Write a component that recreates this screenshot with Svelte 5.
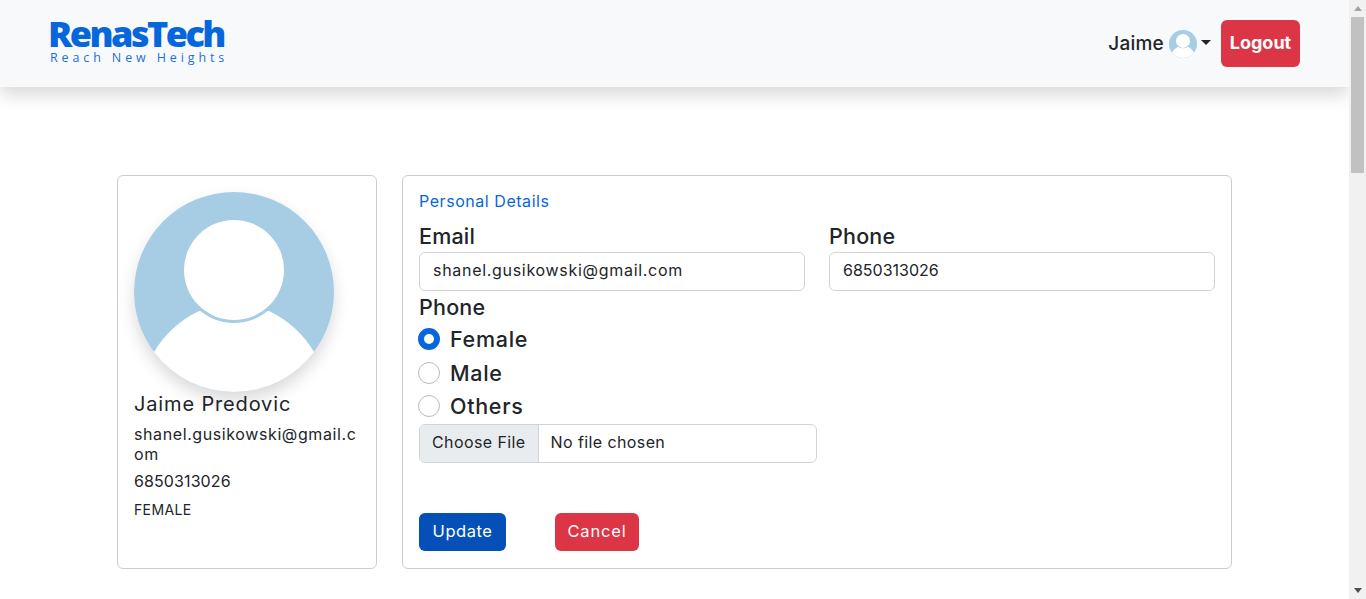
<script>
  let user = {
    first: "Jaime",
    name: "Jaime Predovic",
    email: "shanel.gusikowski@gmail.com",
    phone: "6850313026",
    gender: "FEMALE",
  };
  let genders = ["Female", "Male", "Others"];
  let selected = $state("Female");
</script>

{#snippet avatar(size)}
  <svg width={size} height={size} viewBox="0 0 200 200">
    <circle cx="100" cy="100" r="100" fill="#a6cde4" />
    <path d="M20 160Q36 133 65 119H135Q164 133 180 160A100 100 0 0 1 20 160Z" fill="#fff" />
    <circle cx="100" cy="78" r="53" fill="#a6cde4" />
    <circle cx="100" cy="78" r="50" fill="#fff" />
  </svg>
{/snippet}

<div class="window">
  <div class="page">
    <header>
      <div class="logo">
        <div class="logo-name">RenasTech</div>
        <div class="logo-tag">Reach New Heights</div>
      </div>
      <div class="user">
        <span class="user-name">Jaime</span>
        <span class="user-pic">{@render avatar(28)}</span>
        <span class="caret"></span>
        <button class="btn logout">Logout</button>
      </div>
    </header>

    <main>
      <section class="card side">
        <div class="pic">{@render avatar(200)}</div>
        <h2>{user.name}</h2>
        <p class="mail">{user.email}</p>
        <p class="tel">{user.phone}</p>
        <p class="gender">{user.gender}</p>
      </section>

      <section class="card details">
        <div class="title">Personal Details</div>
        <div class="fields">
          <div>
            <label for="email">Email</label>
            <input id="email" type="text" value={user.email} />
          </div>
          <div>
            <label for="phone">Phone</label>
            <input id="phone" class="digits" type="text" value={user.phone} />
          </div>
        </div>
        <div class="group-label">Phone</div>
        <div class="radios">
          {#each genders as g}
            <button class="radio-row" onclick={() => (selected = g)}>
              <span class="radio" class:on={selected === g}></span>
              <span>{g}</span>
            </button>
          {/each}
        </div>
        <div class="file">
          <span class="file-btn">Choose File</span>
          <span class="file-name">No file chosen</span>
        </div>
        <div class="actions">
          <button class="btn update">Update</button>
          <button class="btn cancel">Cancel</button>
        </div>
      </section>
    </main>
  </div>

  <div class="scrollbar">
    <span class="arrow up"></span>
    <div class="track"><div class="thumb"></div></div>
    <span class="arrow down"></span>
  </div>
</div>

<style>
  :global(body) {
    font-family: Inter, "Liberation Sans", sans-serif;
    color: #212529;
    background: #fff;
  }

  .window {
    display: flex;
    height: 599px;
    overflow: hidden;
  }

  .page {
    flex: 1;
    min-width: 0;
    overflow: hidden;
  }

  header {
    height: 87px;
    box-sizing: border-box;
    display: flex;
    align-items: center;
    justify-content: space-between;
    padding: 0 49px 0 50px;
    background: #f8f9fa;
    box-shadow: 0 8px 16px rgba(0, 0, 0, 0.15);
  }

  .logo {
    margin-top: -4px;
    margin-left: -2px;
  }

  .logo-name {
    font-family: "Open Sans", sans-serif;
    font-size: 36px;
    font-weight: 800;
    line-height: 30px;
    letter-spacing: -2.55px;
    color: #0666dc;
  }

  .logo-tag {
    font-family: "Open Sans", sans-serif;
    font-size: 12.5px;
    line-height: 14px;
    letter-spacing: 3.88px;
    margin: 2px 0 0 2px;
    color: #1a6fdc;
  }

  .user {
    display: flex;
    align-items: center;
  }

  .user-name {
    font-size: 19px;
    font-weight: 500;
    letter-spacing: 0.25px;
    margin-right: 5px;
  }

  .user-pic {
    display: flex;
    margin-right: 4px;
  }

  .caret {
    width: 0;
    height: 0;
    border-top: 5px solid #212529;
    border-left: 5px solid transparent;
    border-right: 5px solid transparent;
    margin: 0 10px 3px 0;
  }

  .btn {
    border: none;
    border-radius: 6px;
    color: #fff;
    font-family: inherit;
    font-size: 16.5px;
    padding: 0 0 2px;
    height: 38px;
  }

  .logout {
    width: 79px;
    height: 47px;
    background: #dc3545;
    font-size: 18px;
    font-weight: 700;
  }

  main {
    display: grid;
    grid-template-columns: 260px 830px;
    gap: 25px;
    padding: 89px 0 0 117px;
    margin-top: -1px;
  }

  .card {
    box-sizing: border-box;
    height: 394px;
    padding: 16px;
    border: 1px solid #ccc;
    border-radius: 6px;
  }

  .pic {
    display: flex;
    width: 200px;
    height: 200px;
    border-radius: 50%;
    box-shadow: 0 8px 16px rgba(0, 0, 0, 0.15);
  }

  h2 {
    font-size: 20px;
    font-weight: 400;
    line-height: 24px;
    letter-spacing: 0.85px;
    margin: 0;
  }

  p {
    margin: 0;
    font-size: 16px;
    line-height: 20px;
    letter-spacing: 0.6px;
  }

  .mail {
    margin-top: 8px;
    overflow-wrap: anywhere;
  }

  .tel {
    margin-top: 7px;
    letter-spacing: 0.1px;
  }

  .gender {
    margin-top: 9px;
    font-size: 14px;
    letter-spacing: 0.35px;
  }

  .title {
    color: #0666dc;
    font-size: 16px;
    line-height: 18px;
    letter-spacing: 0.55px;
  }

  .fields {
    display: grid;
    grid-template-columns: 386px 386px;
    gap: 24px;
    margin-top: 13px;
  }

  label,
  .group-label {
    display: block;
    font-size: 21.5px;
    font-weight: 500;
    line-height: 26px;
    letter-spacing: 0.2px;
  }

  label {
    margin-bottom: 3px;
  }

  input {
    box-sizing: border-box;
    width: 100%;
    height: 39px;
    padding: 0 13px 3px;
    border: 1px solid #ced4da;
    border-radius: 6px;
    font-family: inherit;
    font-size: 16px;
    letter-spacing: 0.7px;
    color: #212529;
    outline: none;
  }

  input.digits {
    letter-spacing: 0;
  }

  .group-label {
    margin-top: 3px;
  }

  .radios {
    padding-top: 2.4px;
  }

  .radio-row {
    display: flex;
    align-items: center;
    gap: 10px;
    width: 100%;
    height: 33.5px;
    padding: 0;
    border: none;
    background: none;
    font-family: inherit;
    font-size: 21.5px;
    font-weight: 500;
    letter-spacing: 0.7px;
    color: #212529;
    margin-left: -1px;
  }

  .radio {
    box-sizing: border-box;
    width: 22px;
    height: 22px;
    border: 1px solid #bbb;
    border-radius: 50%;
    background: #fff;
  }

  .radio.on {
    border: 6px solid #0666dc;
  }

  .file {
    box-sizing: border-box;
    display: flex;
    width: 398px;
    height: 39px;
    margin-top: 1.1px;
    border: 1px solid #ced4da;
    border-radius: 6px;
    overflow: hidden;
    font-size: 16px;
    letter-spacing: 0.4px;
    line-height: 35px;
  }

  .file-btn {
    padding: 0 12px;
    background: #e9ecef;
    border-right: 1px solid #ced4da;
  }

  .file-name {
    padding-left: 12px;
  }

  .actions {
    display: flex;
    gap: 49px;
    margin-top: 50px;
  }

  .update {
    width: 87px;
    background: #0450b8;
    letter-spacing: 0.55px;
  }

  .cancel {
    width: 84px;
    background: #dc3545;
    letter-spacing: 0.85px;
  }

  .scrollbar {
    flex: 0 0 17px;
    display: flex;
    flex-direction: column;
    align-items: center;
    background: #f1f1f1;
  }

  .track {
    flex: 1;
    width: 100%;
  }

  .thumb {
    width: 13px;
    height: 156px;
    margin: 0 auto;
    background: #c1c1c1;
  }

  .arrow {
    width: 0;
    height: 0;
    border-left: 4px solid transparent;
    border-right: 4px solid transparent;
    margin: 6px 0;
  }

  .arrow.up {
    border-bottom: 5px solid #a3a3a3;
  }

  .arrow.down {
    border-top: 5px solid #505050;
  }
</style>
